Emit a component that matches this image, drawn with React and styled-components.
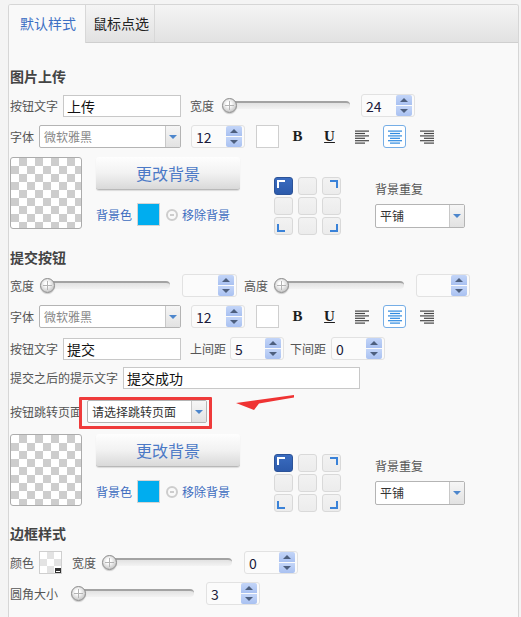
import React from "react";
import styled, { createGlobalStyle } from "styled-components";

const GlobalStyle = createGlobalStyle`
  body {
    margin: 0;
    background: #f4f4f4;
    font-family: "Noto Sans CJK SC", "Noto Sans", sans-serif;
  }
`;

const Panel = styled.div`
  margin: 4px 2px 0 8px;
  height: 613px;
  border: 1px solid #d6d6d6;
  border-bottom: none;
  border-radius: 3px 3px 0 0;
  background: #f9f9f9;
  overflow: hidden;
`;

const TabBar = styled.div`
  display: flex;
  height: 37px;
  border-bottom: 1px solid #cfcfcf;
  background: linear-gradient(#f4f4f4, #e2e2e2);
`;

const Tab = styled.div`
  flex: none;
  height: ${(p) => (p.$active ? "38px" : "37px")};
  padding-left: ${(p) => (p.$active ? "11px" : "7px")};
  box-sizing: border-box;
  width: ${(p) => p.$w}px;
  border-right: 1px solid #d8d8d8;
  background: ${(p) => (p.$active ? "#f9f9f9" : "transparent")};
  color: ${(p) => (p.$active ? "#3d70c4" : "#222")};
  font-size: 14px;
  line-height: 37px;
  white-space: nowrap;
  overflow: hidden;
`;

const Content = styled.div`
  padding-left: 1px;
`;

const Title = styled.div`
  margin-top: ${(p) => p.$mt}px;
  height: 22px;
  line-height: 22px;
  font-size: 14px;
  font-weight: bold;
  color: #444;
`;

const Row = styled.div`
  display: flex;
  align-items: center;
  height: 23px;
  margin-top: ${(p) => p.$mt}px;
`;

const Label = styled.span`
  margin-left: ${(p) => p.$ml || 0}px;
  font-size: 12px;
  line-height: 23px;
  color: #555;
  white-space: nowrap;
`;

const TextInput = styled.input`
  margin-left: ${(p) => p.$ml || 0}px;
  width: ${(p) => p.$w}px;
  height: 22px;
  box-sizing: border-box;
  border: 1px solid #c8c8c8;
  background: #fff;
  padding: 0 3px;
  font-family: inherit;
  font-size: 14px;
  color: #111;
  outline: none;
`;

const SliderBox = styled.div`
  position: relative;
  margin-left: ${(p) => p.$ml || 0}px;
  width: ${(p) => p.$w}px;
  height: 15px;
`;

const Track = styled.div`
  margin: 3px 0 0 7px;
  height: 8px;
  box-sizing: border-box;
  border-radius: 0 5px 5px 0;
  border-top: 2px solid #a3a3a3;
  background: linear-gradient(#e2e2e2, #f3f3f3);
`;

const Knob = styled.div`
  position: absolute;
  left: 0;
  top: 0;
  width: 15px;
  height: 15px;
  box-sizing: border-box;
  border-radius: 50%;
  border: 1px solid #8a8a8a;
  background: radial-gradient(circle at 45% 40%, #ffffff 20%, #d6d6d6 60%, #a9a9a9 100%);
  box-shadow: 0 1px 1px rgba(0, 0, 0, 0.2);

  &::before,
  &::after {
    content: "";
    position: absolute;
    background: #b4b4b4;
  }
  &::before {
    left: 6px;
    top: 2px;
    width: 1px;
    height: 9px;
  }
  &::after {
    left: 2px;
    top: 6px;
    width: 9px;
    height: 1px;
  }
`;

const SpinnerBox = styled.div`
  display: flex;
  align-items: center;
  margin-left: ${(p) => p.$ml || 0}px;
  width: ${(p) => p.$w || 54}px;
  height: 23px;
  box-sizing: border-box;
  border: 1px solid #e2e2e2;
  border-radius: 3px;
  background: #fbfbfb;
`;

const SpinValue = styled.span`
  flex: 1;
  padding-left: 4px;
  font-size: 14px;
  color: #1a1a3a;
`;

const SpinArrows = styled.div`
  display: flex;
  flex-direction: column;
  gap: 1px;
  margin-right: 2px;
  width: 16px;
`;

const SpinHalf = styled.div`
  display: flex;
  align-items: center;
  justify-content: center;
  height: 10px;
  border-radius: ${(p) => (p.$up ? "2px 2px 0 0" : "0 0 2px 2px")};
  background: linear-gradient(#c3d5f8, #a9c1f1);

  &::after {
    content: "";
    border-left: 4px solid transparent;
    border-right: 4px solid transparent;
    ${(p) => (p.$up ? "border-bottom" : "border-top")}: 4px solid #4d5f7e;
  }
`;

const SelectBox = styled.div`
  display: flex;
  margin-left: ${(p) => p.$ml || 0}px;
  width: ${(p) => p.$w}px;
  height: ${(p) => p.$h || 23}px;
  box-sizing: border-box;
  border: 1px solid #b4b4b4;
  border-radius: 2px;
  background: #fff;
`;

const SelectText = styled.span`
  flex: 1;
  padding-left: 4px;
  font-size: 12px;
  line-height: ${(p) => (p.$h || 23) - 2}px;
  color: ${(p) => (p.$muted ? "#888" : "#333")};
  white-space: nowrap;
`;

const SelectArrow = styled.div`
  display: flex;
  align-items: center;
  justify-content: center;
  width: 14px;
  border-left: 1px solid #c8c8c8;
  background: linear-gradient(#f6f6f6, #e2e2e2);

  &::after {
    content: "";
    border-left: 4px solid transparent;
    border-right: 4px solid transparent;
    border-top: 4px solid #4d86cc;
  }
`;

const ColorSquare = styled.div`
  margin-left: ${(p) => p.$ml || 0}px;
  width: 23px;
  height: 23px;
  box-sizing: border-box;
  border: 1px solid #cfcfcf;
  background: #fff;
`;

const StyleBtn = styled.div`
  display: flex;
  align-items: center;
  justify-content: center;
  margin-left: ${(p) => p.$ml || 0}px;
  width: 23px;
  height: 23px;
  box-sizing: border-box;
  border: 1px solid ${(p) => (p.$on ? "#76aee6" : "transparent")};
  border-radius: 3px;
  background: ${(p) => (p.$on ? "#fff" : "transparent")};
  font-family: "Liberation Serif", serif;
  font-weight: bold;
  font-size: 15px;
  color: #1e1e1e;
  text-decoration: ${(p) => (p.$u ? "underline" : "none")};
`;

const BgBlock = styled.div`
  display: flex;
  align-items: flex-start;
  height: 79px;
  margin-top: ${(p) => p.$mt}px;
`;

const Checker = styled.div`
  width: 72px;
  height: 72px;
  box-sizing: border-box;
  border: 1px solid #acacac;
  border-radius: 3px;
  background-color: #fff;
  background-image: linear-gradient(45deg, #cdcdcd 25%, transparent 25%, transparent 75%, #cdcdcd 75%),
    linear-gradient(45deg, #cdcdcd 25%, transparent 25%, transparent 75%, #cdcdcd 75%);
  background-size: 16px 16px;
  background-position: 0 0, 8px 8px;
`;

const MiddleCol = styled.div`
  margin-left: 14px;
  width: 144px;
`;

const ChangeBtn = styled.div`
  height: 33px;
  box-sizing: border-box;
  border-radius: 3px;
  border-bottom: 1px solid #b8b8b8;
  background: linear-gradient(#fefefe 0%, #f2f2f2 50%, #d9d9d9 100%);
  box-shadow: 0 1px 1px rgba(0, 0, 0, 0.12);
  text-align: center;
  font-size: 16px;
  line-height: 33px;
  color: #4b79c6;
`;

const SwatchRow = styled.div`
  display: flex;
  align-items: center;
  margin-top: 13px;
  height: 23px;
`;

const BlueLabel = styled.span`
  margin-left: ${(p) => p.$ml || 0}px;
  font-size: 12px;
  color: #3c6cbf;
  white-space: nowrap;
`;

const Swatch = styled.div`
  margin-left: 5px;
  width: 23px;
  height: 23px;
  box-sizing: border-box;
  border: 1px solid #d4d4d4;
  background: #00adef;
`;

const RemoveIcon = styled.div`
  position: relative;
  margin-left: 6px;
  width: 12px;
  height: 12px;
  box-sizing: border-box;
  border: 2px solid #cdcdcd;
  border-radius: 50%;

  &::after {
    content: "";
    position: absolute;
    left: 2px;
    top: 3px;
    width: 4px;
    height: 2px;
    background: #cdcdcd;
  }
`;

const PosGrid = styled.div`
  display: grid;
  grid-template-columns: repeat(3, 19px);
  grid-auto-rows: 18px;
  column-gap: 5px;
  row-gap: 2px;
  margin: 20px 0 0 34px;
`;

const PosCell = styled.div`
  position: relative;
  box-sizing: border-box;
  border: 1px solid ${(p) => (p.$on ? "#2c5398" : "#d9d9d9")};
  border-radius: 3px;
  background: ${(p) =>
    p.$on ? "linear-gradient(#3a6cc0, #2c5aab)" : "linear-gradient(#f2f2f2, #ececec)"};

  &::after {
    content: "";
    position: absolute;
    width: 6px;
    height: 6px;
    display: ${(p) => (p.$corner ? "block" : "none")};
    border-color: ${(p) => (p.$on ? "#fff" : "#3a82d8")};
    border-style: solid;
    border-width: ${(p) =>
      ({ tl: "2px 0 0 2px", tr: "2px 2px 0 0", bl: "0 0 2px 2px", br: "0 2px 2px 0" }[p.$corner] ||
      "0")};
    ${(p) => (p.$corner && p.$corner[0] === "t" ? "top: 2px;" : "bottom: 2px;")}
    ${(p) => (p.$corner && p.$corner[1] === "l" ? "left: 2px;" : "right: 2px;")}
  }
`;

const RepeatCol = styled.div`
  margin: 24px 0 0 34px;
`;

const RepeatLabel = styled.div`
  height: 16px;
  line-height: 16px;
  margin-bottom: 7px;
  font-size: 12px;
  color: #555;
`;

const AnnotWrap = styled.div`
  position: relative;
  margin-left: 5px;
`;

const RedFrame = styled.div`
  position: absolute;
  left: -8px;
  top: -3px;
  right: -5px;
  bottom: -6px;
  border: 3px solid #ef3b3b;
  border-radius: 1px;
  pointer-events: none;
`;

const RedArrow = styled.svg`
  position: absolute;
  left: 148px;
  top: -10px;
`;

const SmallChecker = styled.div`
  position: relative;
  margin-left: 5px;
  width: 23px;
  height: 23px;
  box-sizing: border-box;
  border: 1px solid #cfcfcf;
  background-color: #fff;
  background-image: linear-gradient(45deg, #e3e3e3 25%, transparent 25%, transparent 75%, #e3e3e3 75%),
    linear-gradient(45deg, #e3e3e3 25%, transparent 25%, transparent 75%, #e3e3e3 75%);
  background-size: 14px 14px;
  background-position: 0 0, 7px 7px;

  &::after {
    content: "";
    position: absolute;
    right: 0;
    bottom: 0;
    width: 6px;
    height: 5px;
    background: #333;
    box-shadow: inset 0 0 0 1px #333, inset 0 -2px 0 0 #fff;
  }
`;

function Slider({ w, ml }) {
  return (
    <SliderBox $w={w} $ml={ml}>
      <Track />
      <Knob />
    </SliderBox>
  );
}

function Spinner({ value, ml, w }) {
  return (
    <SpinnerBox $ml={ml} $w={w}>
      <SpinValue>{value}</SpinValue>
      <SpinArrows>
        <SpinHalf $up />
        <SpinHalf />
      </SpinArrows>
    </SpinnerBox>
  );
}

function Select({ w, ml, text, muted, h }) {
  return (
    <SelectBox $w={w} $ml={ml} $h={h}>
      <SelectText $muted={muted} $h={h}>
        {text}
      </SelectText>
      <SelectArrow />
    </SelectBox>
  );
}

function AlignIcon({ type, color }) {
  const rows = [0, 1, 2, 3, 4, 5];
  return (
    <svg width="14" height="14" viewBox="0 0 14 14">
      {rows.map((i) => {
        const long = i % 2 === 0;
        const len = long ? 14 : 10;
        let x = 0;
        if (type === "center") x = (14 - len) / 2;
        if (type === "right") x = 14 - len;
        return (
          <rect key={i} x={x} y={i * 2.4 + 0.5} width={len} height="1.2" fill={color} />
        );
      })}
    </svg>
  );
}

function FontRow({ mt }) {
  return (
    <Row $mt={mt}>
      <Label>字体</Label>
      <Select w={142} ml={5} text="微软雅黑" muted />
      <Spinner value="12" ml={10} />
      <ColorSquare $ml={11} />
      <StyleBtn $ml={7}>B</StyleBtn>
      <StyleBtn $ml={9} $u>
        U
      </StyleBtn>
      <StyleBtn $ml={9}>
        <AlignIcon type="left" color="#474747" />
      </StyleBtn>
      <StyleBtn $ml={10} $on>
        <AlignIcon type="center" color="#2e8ae0" />
      </StyleBtn>
      <StyleBtn $ml={9}>
        <AlignIcon type="right" color="#474747" />
      </StyleBtn>
    </Row>
  );
}

const corners = [
  ["tl", true],
  [null],
  ["tr"],
  [null],
  [null],
  [null],
  ["bl"],
  [null],
  ["br"],
];

function Background({ mt }) {
  return (
    <BgBlock $mt={mt}>
      <Checker />
      <MiddleCol>
        <ChangeBtn>更改背景</ChangeBtn>
        <SwatchRow>
          <BlueLabel>背景色</BlueLabel>
          <Swatch />
          <RemoveIcon />
          <BlueLabel $ml={4}>移除背景</BlueLabel>
        </SwatchRow>
      </MiddleCol>
      <PosGrid>
        {corners.map(([c, on], i) => (
          <PosCell key={i} $corner={c} $on={on} />
        ))}
      </PosGrid>
      <RepeatCol>
        <RepeatLabel>背景重复</RepeatLabel>
        <Select w={90} text="平铺" h={24} />
      </RepeatCol>
    </BgBlock>
  );
}

export default function App() {
  return (
    <>
      <GlobalStyle />
      <Panel>
        <TabBar>
          <Tab $active $w={77}>
            默认样式
          </Tab>
          <Tab $w={69}>鼠标点选</Tab>
        </TabBar>
        <Content>
          <Title $mt={22}>图片上传</Title>
          <Row $mt={7}>
            <Label>按钮文字</Label>
            <TextInput $ml={5} $w={118} defaultValue="上传" readOnly />
            <Label $ml={9}>宽度</Label>
            <Slider ml={8} w={128} />
            <Spinner value="24" ml={11} />
          </Row>
          <FontRow mt={8} />
          <Background mt={9} />

          <Title $mt={10}>提交按钮</Title>
          <Row $mt={6}>
            <Label>宽度</Label>
            <Slider ml={6} w={130} />
            <Spinner value="" ml={12} w={55} />
            <Label $ml={7}>高度</Label>
            <Slider ml={6} w={130} />
            <Spinner value="" ml={12} />
          </Row>
          <FontRow mt={8} />
          <Row $mt={9}>
            <Label>按钮文字</Label>
            <TextInput $ml={5} $w={118} defaultValue="提交" readOnly />
            <Label $ml={9}>上间距</Label>
            <Spinner value="5" ml={4} />
            <Label $ml={6}>下间距</Label>
            <Spinner value="0" ml={5} />
          </Row>
          <Row $mt={6}>
            <Label>提交之后的提示文字</Label>
            <TextInput $ml={5} $w={237} defaultValue="提交成功" readOnly />
          </Row>
          <Row $mt={11}>
            <Label>按钮跳转页面</Label>
            <AnnotWrap>
              <Select w={120} text="请选择跳转页面" />
              <RedFrame />
              <RedArrow width="62" height="22" viewBox="0 0 62 22">
                <polygon points="1,13 59,5 59,7.5 24,13.5 19,20" fill="#ef3333" />
              </RedArrow>
            </AnnotWrap>
          </Row>
          <Background mt={11} />

          <Title $mt={9}>边框样式</Title>
          <Row $mt={7}>
            <Label>颜色</Label>
            <SmallChecker />
            <Label $ml={10}>宽度</Label>
            <Slider ml={6} w={130} />
            <Spinner value="0" ml={12} />
          </Row>
          <Row $mt={8}>
            <Label>圆角大小</Label>
            <Slider ml={13} w={123} />
            <Spinner value="3" ml={12} />
          </Row>
        </Content>
      </Panel>
    </>
  );
}
